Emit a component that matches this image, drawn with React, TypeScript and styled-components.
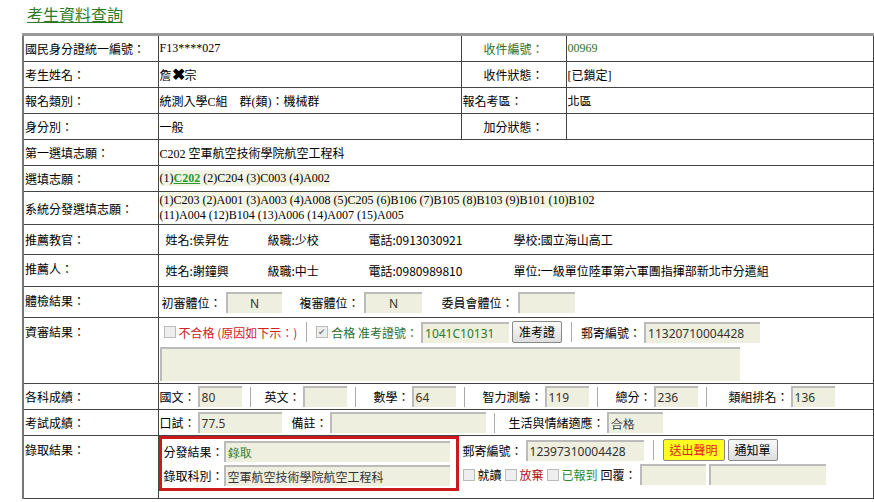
import styled, { createGlobalStyle } from "styled-components";

const Global = createGlobalStyle`
  body {
    margin: 0;
    background: #fff;
    font-family: "Liberation Serif", "Noto Sans CJK TC", serif;
    font-size: 12px;
    color: #000;
  }
`;

const Page = styled.div`
  padding: 4px 0 0 22px;
  width: 852px;
`;

const Title = styled.a`
  display: block;
  margin: 0 0 9px 5px;
  font-family: "Noto Sans CJK TC", sans-serif;
  font-size: 16px;
  line-height: 20px;
  color: #2b7a2b;
  text-decoration: underline;
`;

const Table = styled.table`
  width: 852px;
  border-collapse: collapse;
  border-top: 3px solid #999;
  border-left: 2px solid #777;
  table-layout: fixed;
`;

const Label = styled.td<{ $align?: string; $green?: boolean }>`
  border: 1px solid #444;
  padding: 0 1px;
  height: 25px;
  vertical-align: ${(p) => (p.$align === "top" ? "top" : "middle")};
  padding-top: ${(p) => (p.$align === "top" ? "5px" : "0")};
  text-align: ${(p) => (p.$align === "center" ? "center" : "left")};
  color: ${(p) => (p.$green ? "#2b6f2b" : "#000")};
  font-family: "Noto Sans CJK TC", sans-serif;
  font-size: 12px;
  white-space: nowrap;
  overflow: hidden;
`;

const Cell = styled.td<{ $green?: boolean }>`
  border: 1px solid #444;
  padding: 0 1px;
  height: 25px;
  color: ${(p) => (p.$green ? "#2b6f2b" : "#000")};
  font-family: "Liberation Serif", "Noto Sans CJK TC", serif;
  white-space: nowrap;
  overflow: hidden;
`;

const Line = styled.div<{ $gap?: number }>`
  display: flex;
  align-items: center;
  gap: ${(p) => p.$gap ?? 4}px;
  font-family: "Noto Sans CJK TC", sans-serif;
  font-size: 12px;
`;

const Shade = styled.span`
  background: #f4f4e4;
  padding: 1px 0;
`;

const Strong = styled.span`
  color: #2b9a2b;
  font-weight: bold;
  text-decoration: underline;
`;

const Field = styled.span<{ $w: number; $color?: string; $center?: boolean }>`
  display: inline-block;
  box-sizing: border-box;
  width: ${(p) => p.$w}px;
  height: 21px;
  line-height: 19px;
  background: #efefdf;
  border-top: 2px solid #bbb;
  border-left: 2px solid #bbb;
  padding: 0 2px;
  color: ${(p) => p.$color ?? "#333"};
  text-align: ${(p) => (p.$center ? "center" : "left")};
  font-family: "Noto Sans", sans-serif;
  font-size: 12px;
  overflow: hidden;
`;

const Sep = styled.span`
  display: inline-block;
  width: 1px;
  height: 20px;
  background: #aaa;
  margin: 0 6px;
`;

const Box = styled.span`
  display: inline-block;
  width: 10px;
  height: 10px;
  border: 1px solid #bbb;
  background: #eee;
  font-size: 9px;
  line-height: 10px;
  text-align: center;
  color: #888;
`;

const Text = styled.span<{ $color?: string }>`
  color: ${(p) => p.$color ?? "#000"};
`;

const Button = styled.span<{ $yellow?: boolean }>`
  display: inline-block;
  height: 20px;
  line-height: 20px;
  padding: 0 6px;
  border: 1px solid #888;
  border-radius: 2px;
  background: ${(p) => (p.$yellow ? "#ffff22" : "linear-gradient(#fafafa, #ddd)")};
  color: ${(p) => (p.$yellow ? "#e02020" : "#000")};
`;

const Area = styled.div`
  margin: 4px 0 2px 0;
  width: 580px;
  height: 34px;
  background: #efefdf;
  border-top: 2px solid #bbb;
  border-left: 2px solid #bbb;
  box-sizing: border-box;
`;

const Admit = styled.div`
  display: flex;
  align-items: flex-start;
  gap: 4px;
`;

const RedBox = styled.div`
  border: 3px solid #cc1a1a;
  width: 300px;
  box-sizing: border-box;
  padding: 2px;
  display: flex;
  flex-direction: column;
  gap: 3px;
`;

const Right = styled.div`
  display: flex;
  flex-direction: column;
  gap: 3px;
  padding-top: 3px;
`;

const Gap = styled.span<{ $w: number }>`
  display: inline-block;
  width: ${(p) => p.$w}px;
`;

export default function App() {
  return (
    <>
      <Global />
      <Page>
        <Title>考生資料查詢</Title>
        <Table>
          <colgroup>
            <col style={{ width: 135 }} />
            <col style={{ width: 303 }} />
            <col style={{ width: 105 }} />
            <col />
          </colgroup>
          <tbody>
            <tr>
              <Label>國民身分證統一編號：</Label>
              <Cell>F13****027</Cell>
              <Label $align="center" $green>收件編號：</Label>
              <Cell $green>00969</Cell>
            </tr>
            <tr>
              <Label>考生姓名：</Label>
              <Cell>詹<b style={{ fontSize: 16 }}>✖</b>宗</Cell>
              <Label $align="center">收件狀態：</Label>
              <Cell>[已鎖定]</Cell>
            </tr>
            <tr>
              <Label>報名類別：</Label>
              <Cell>統測入學C組　群(類)：機械群</Cell>
              <Label>報名考區：</Label>
              <Cell>北區</Cell>
            </tr>
            <tr>
              <Label>身分別：</Label>
              <Cell>一般</Cell>
              <Label $align="center">加分狀態：</Label>
              <Cell></Cell>
            </tr>
            <tr>
              <Label>第一選填志願：</Label>
              <Cell colSpan={3}>C202 空軍航空技術學院航空工程科</Cell>
            </tr>
            <tr>
              <Label>選填志願：</Label>
              <Cell colSpan={3}>
                <Shade>(1)<Strong>C202</Strong> (2)C204 (3)C003 (4)A002</Shade>
              </Cell>
            </tr>
            <tr>
              <Label>系統分發選填志願：</Label>
              <Cell colSpan={3} style={{ height: 32, lineHeight: "15px" }}>
                <Shade>(1)C203 (2)A001 (3)A003 (4)A008 (5)C205 (6)B106 (7)B105 (8)B103 (9)B101 (10)B102</Shade>
                <br />
                (11)A004 (12)B104 (13)A006 (14)A007 (15)A005
              </Cell>
            </tr>
            <tr>
              <Label>推薦教官：</Label>
              <Cell colSpan={3} style={{ height: 29 }}>
                <Line $gap={0} style={{ paddingLeft: 6 }}>
                  <span style={{ width: 102 }}>姓名:侯昇佐</span>
                  <span style={{ width: 101 }}>級職:少校</span>
                  <span style={{ width: 145 }}>電話:0913030921</span>
                  <span>學校:國立海山高工</span>
                </Line>
              </Cell>
            </tr>
            <tr>
              <Label $align="top">推薦人：</Label>
              <Cell colSpan={3} style={{ height: 31 }}>
                <Line $gap={0} style={{ paddingLeft: 6 }}>
                  <span style={{ width: 102 }}>姓名:謝鐘興</span>
                  <span style={{ width: 101 }}>級職:中士</span>
                  <span style={{ width: 145 }}>電話:0980989810</span>
                  <span>單位:一級單位陸軍第六軍團指揮部新北市分遣組</span>
                </Line>
              </Cell>
            </tr>
            <tr>
              <Label $align="top">體檢結果：</Label>
              <Cell colSpan={3} style={{ height: 30 }}>
                <Line>
                  <span style={{ marginLeft: 2 }}>初審體位：</span>
                  <Field $w={56} $center>N</Field>
                  <span style={{ marginLeft: 14 }}>複審體位：</span>
                  <Field $w={58} $center>N</Field>
                  <span style={{ marginLeft: 16 }}>委員會體位：</span>
                  <Field $w={57} />
                </Line>
              </Cell>
            </tr>
            <tr>
              <Label $align="top">資審結果：</Label>
              <Cell colSpan={3} style={{ height: 61, paddingTop: 3, verticalAlign: "top" }}>
                <Line $gap={3}>
                  <Box style={{ marginLeft: 4 }} />
                  <Text $color="#d02020">不合格 (原因如下示：)</Text>
                  <Sep />
                  <Box>✔</Box>
                  <Text $color="#2b6f2b">合格 准考證號：</Text>
                  <Field $w={88} $color="#2b7a2b">1041C10131</Field>
                  <Button>准考證</Button>
                  <Sep />
                  <span>郵寄編號：</span>
                  <Field $w={116}>11320710004428</Field>
                </Line>
                <Area />
              </Cell>
            </tr>
            <tr>
              <Label>各科成績：</Label>
              <Cell colSpan={3}>
                <Line $gap={2}>
                  <span>國文：</span><Field $w={44}>80</Field><Sep />
                  <Gap $w={4} /><span>英文：</span><Field $w={44} /><Sep />
                  <Gap $w={8} /><span>數學：</span><Field $w={44}>64</Field><Sep />
                  <Gap $w={8} /><span>智力測驗：</span><Field $w={44}>119</Field><Sep />
                  <Gap $w={8} /><span>總分：</span><Field $w={44}>236</Field><Sep />
                  <Gap $w={12} /><span>類組排名：</span><Field $w={44}>136</Field>
                </Line>
              </Cell>
            </tr>
            <tr>
              <Label>考試成績：</Label>
              <Cell colSpan={3}>
                <Line $gap={2}>
                  <span>口試：</span><Field $w={84}>77.5</Field>
                  <Gap $w={6} /><span>備註：</span><Field $w={156} /><Sep />
                  <Gap $w={4} /><span>生活與情緒適應：</span><Field $w={56}>合格</Field>
                </Line>
              </Cell>
            </tr>
            <tr>
              <Label $align="top">錄取結果：</Label>
              <Cell colSpan={3} style={{ height: 62, verticalAlign: "top", padding: 0 }}>
                <Admit>
                  <RedBox>
                    <Line $gap={0}>
                      <span>分發結果：</span>
                      <Field $w={226} $color="#2b7a2b">錄取</Field>
                    </Line>
                    <Line $gap={0}>
                      <span>錄取科別：</span>
                      <Field $w={226} style={{ fontFamily: "Noto Sans CJK TC" }}>空軍航空技術學院航空工程科</Field>
                    </Line>
                  </RedBox>
                  <Right>
                    <Line $gap={3}>
                      <span>郵寄編號：</span>
                      <Field $w={118}>12397310004428</Field>
                      <Sep />
                      <Button $yellow>送出聲明</Button>
                      <Button>通知單</Button>
                    </Line>
                    <Line $gap={3}>
                      <Box />
                      <span>就讀</span>
                      <Box />
                      <Text $color="#b01010">放棄</Text>
                      <Box />
                      <Text $color="#2b8a2b">已報到</Text>
                      <span>回覆：</span>
                      <Field $w={66} />
                      <Field $w={117} />
                    </Line>
                  </Right>
                </Admit>
              </Cell>
            </tr>
          </tbody>
        </Table>
      </Page>
    </>
  );
}
